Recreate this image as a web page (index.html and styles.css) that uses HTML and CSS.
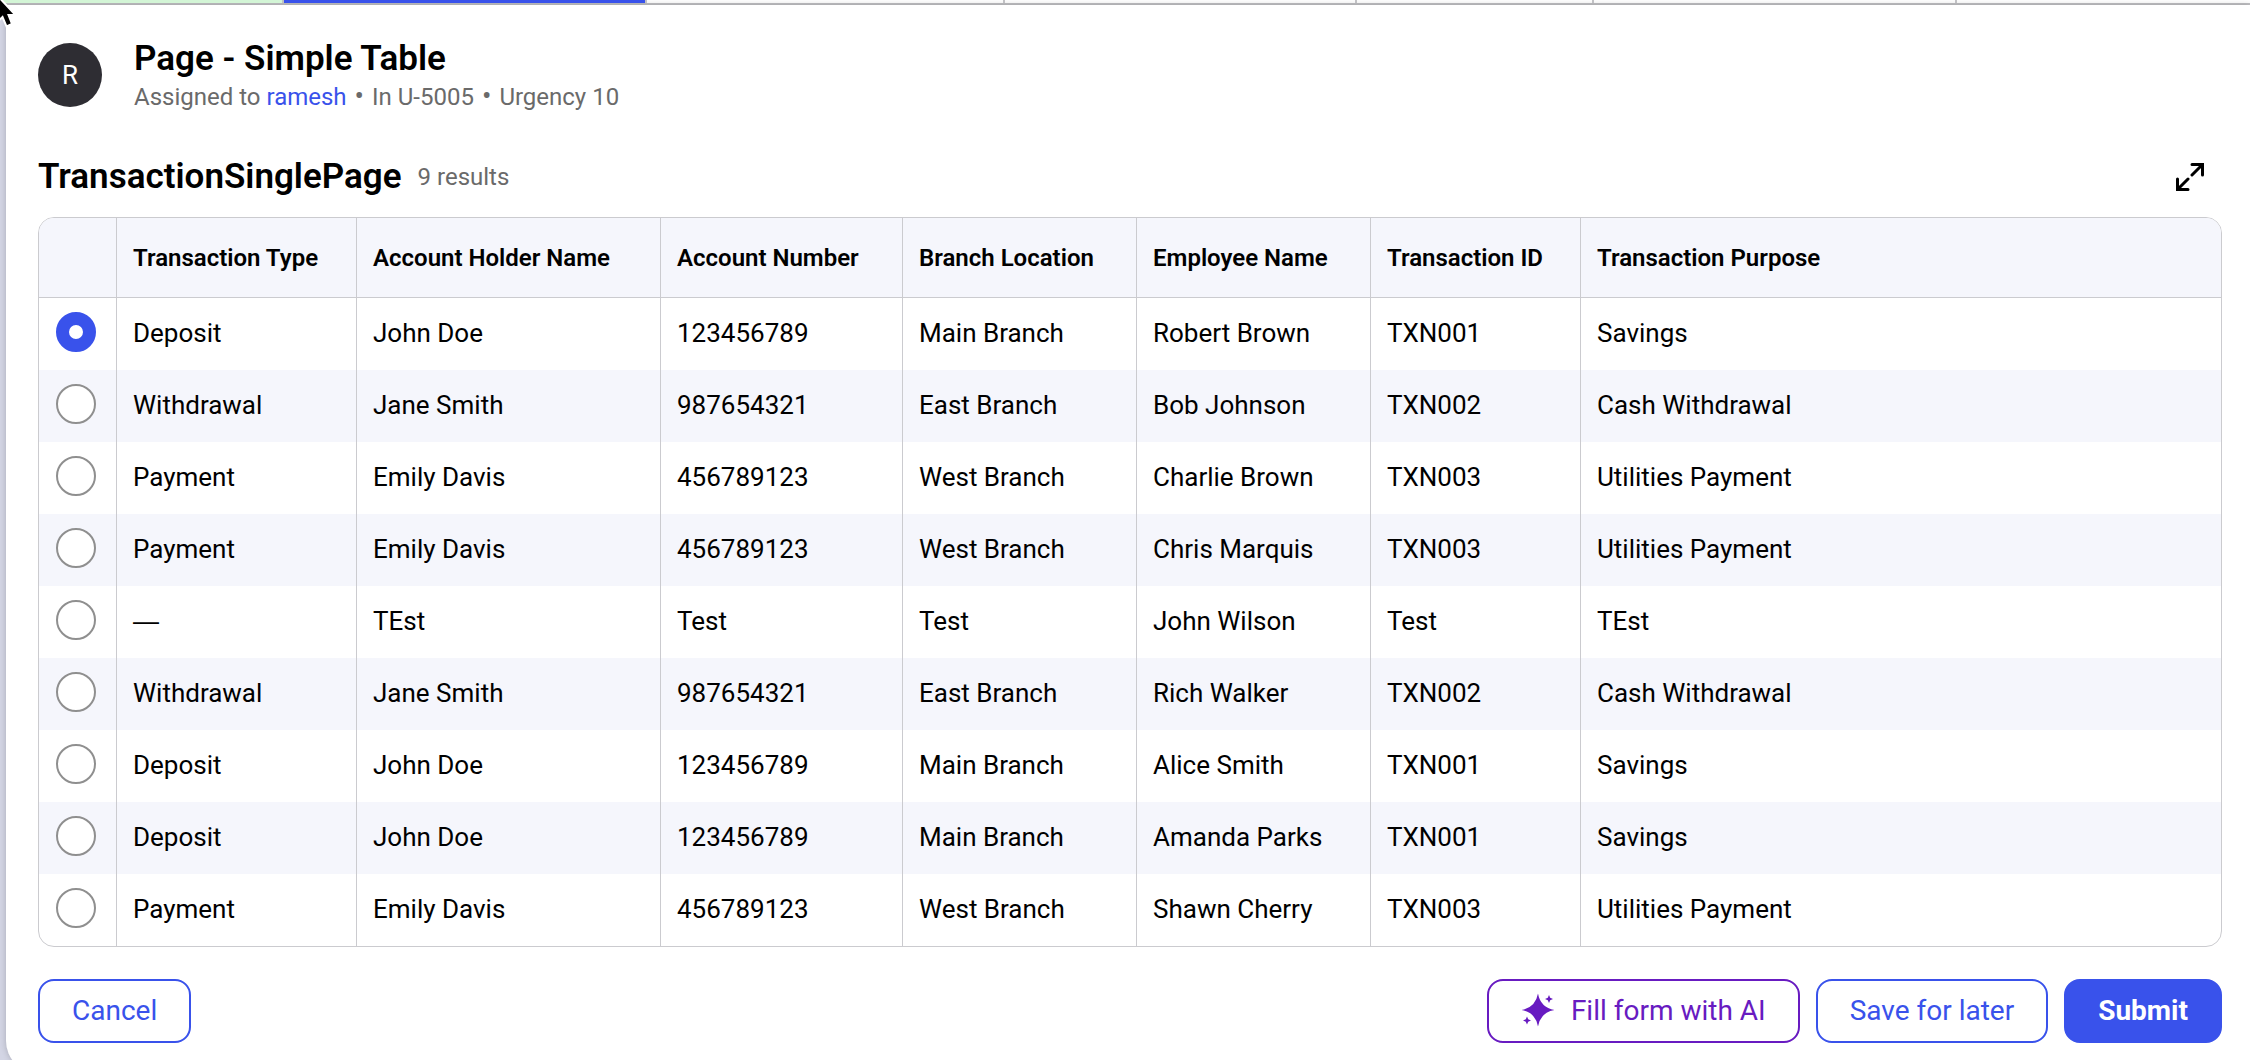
FILE: index.html
```html
<!DOCTYPE html>
<html lang="en">
<head>
    <meta charset="UTF-8">
    <meta name="viewport" content="width=device-width, initial-scale=1.0">
    <title>Page - Simple Table</title>
    <link rel="stylesheet" href="styles.css">
</head>
<body>
    <div class="stages">
        <span class="stage done"></span>
        <span class="stage current"></span>
        <span class="stage"></span>
        <span class="stage"></span>
        <span class="stage"></span>
        <span class="stage"></span>
        <span class="stage last"></span>
    </div>

    <main class="panel">
        <header class="assignment">
            <div class="avatar">R</div>
            <div>
                <h1>Page - Simple Table</h1>
                <p class="meta">Assigned to <a href="#">ramesh</a><span class="dot">•</span>In U-5005<span class="dot">•</span>Urgency 10</p>
            </div>
        </header>

        <div class="table-header">
            <h2>TransactionSinglePage</h2>
            <span class="results">9 results</span>
            <button type="button" class="expand-btn" aria-label="Expand">
                <svg width="28" height="28" viewBox="0 0 28 28" fill="none" stroke="#000" stroke-width="3">
                    <path d="M16 12L26 2M2 26L12 16" stroke-linecap="round"/>
                    <path d="M16 1.5H26.5V12M1.5 16V26.5H12" stroke-linecap="round"/>
                </svg>
            </button>
        </div>

        <div class="table-wrap">
            <table>
                <colgroup>
                    <col class="col-select">
                    <col class="col-type">
                    <col class="col-holder">
                    <col class="col-number">
                    <col class="col-branch">
                    <col class="col-employee">
                    <col class="col-id">
                    <col>
                </colgroup>
                <thead>
                    <tr>
                        <th></th>
                        <th>Transaction Type</th>
                        <th>Account Holder Name</th>
                        <th>Account Number</th>
                        <th>Branch Location</th>
                        <th>Employee Name</th>
                        <th>Transaction ID</th>
                        <th>Transaction Purpose</th>
                    </tr>
                </thead>
                <tbody>
                    <tr>
                        <td><input type="radio" name="txn" aria-label="Robert Brown" checked></td>
                        <td>Deposit</td>
                        <td>John Doe</td>
                        <td>123456789</td>
                        <td>Main Branch</td>
                        <td>Robert Brown</td>
                        <td>TXN001</td>
                        <td>Savings</td>
                    </tr>
                    <tr>
                        <td><input type="radio" name="txn" aria-label="Bob Johnson"></td>
                        <td>Withdrawal</td>
                        <td>Jane Smith</td>
                        <td>987654321</td>
                        <td>East Branch</td>
                        <td>Bob Johnson</td>
                        <td>TXN002</td>
                        <td>Cash Withdrawal</td>
                    </tr>
                    <tr>
                        <td><input type="radio" name="txn" aria-label="Charlie Brown"></td>
                        <td>Payment</td>
                        <td>Emily Davis</td>
                        <td>456789123</td>
                        <td>West Branch</td>
                        <td>Charlie Brown</td>
                        <td>TXN003</td>
                        <td>Utilities Payment</td>
                    </tr>
                    <tr>
                        <td><input type="radio" name="txn" aria-label="Chris Marquis"></td>
                        <td>Payment</td>
                        <td>Emily Davis</td>
                        <td>456789123</td>
                        <td>West Branch</td>
                        <td>Chris Marquis</td>
                        <td>TXN003</td>
                        <td>Utilities Payment</td>
                    </tr>
                    <tr>
                        <td><input type="radio" name="txn" aria-label="John Wilson"></td>
                        <td class="empty">—</td>
                        <td>TEst</td>
                        <td>Test</td>
                        <td>Test</td>
                        <td>John Wilson</td>
                        <td>Test</td>
                        <td>TEst</td>
                    </tr>
                    <tr>
                        <td><input type="radio" name="txn" aria-label="Rich Walker"></td>
                        <td>Withdrawal</td>
                        <td>Jane Smith</td>
                        <td>987654321</td>
                        <td>East Branch</td>
                        <td>Rich Walker</td>
                        <td>TXN002</td>
                        <td>Cash Withdrawal</td>
                    </tr>
                    <tr>
                        <td><input type="radio" name="txn" aria-label="Alice Smith"></td>
                        <td>Deposit</td>
                        <td>John Doe</td>
                        <td>123456789</td>
                        <td>Main Branch</td>
                        <td>Alice Smith</td>
                        <td>TXN001</td>
                        <td>Savings</td>
                    </tr>
                    <tr>
                        <td><input type="radio" name="txn" aria-label="Amanda Parks"></td>
                        <td>Deposit</td>
                        <td>John Doe</td>
                        <td>123456789</td>
                        <td>Main Branch</td>
                        <td>Amanda Parks</td>
                        <td>TXN001</td>
                        <td>Savings</td>
                    </tr>
                    <tr>
                        <td><input type="radio" name="txn" aria-label="Shawn Cherry"></td>
                        <td>Payment</td>
                        <td>Emily Davis</td>
                        <td>456789123</td>
                        <td>West Branch</td>
                        <td>Shawn Cherry</td>
                        <td>TXN003</td>
                        <td>Utilities Payment</td>
                    </tr>
                </tbody>
            </table>
        </div>

        <footer class="actions">
            <button type="button" class="btn">Cancel</button>
            <div class="actions-right">
                <button type="button" class="btn btn-ai">
                    <svg width="34" height="34" viewBox="0 0 34 34" fill="currentColor">
                        <path d="M17 0.5Q19.5 14.5 33.5 17Q19.5 19.5 17 33.5Q14.5 19.5 0.5 17Q14.5 14.5 17 0.5Z"/>
                        <path d="M17 7Q19 15 27 17Q19 19 17 27Q15 19 7 17Q15 15 17 7Z" stroke="currentColor" stroke-width="2"/>
                        <path d="M28 2L29.2 4.8L32 6L29.2 7.2L28 10L26.8 7.2L24 6L26.8 4.8Z"/>
                        <path d="M6 23.5L7.2 26.3L10 27.5L7.2 28.7L6 31.500L4.8 28.7L2 27.5L4.8 26.3Z"/>
                    </svg>
                    Fill form with AI
                </button>
                <button type="button" class="btn">Save for later</button>
                <button type="button" class="btn btn-primary">Submit</button>
            </div>
        </footer>
    </main>

    <svg class="cursor" width="17" height="30" viewBox="0 0 17 30">
        <path d="M-6 -8L15.5 15H8.500L12 24L6.5 26.5L2.5 17L-6 25Z" fill="#000" stroke="#fff" stroke-width="2"/>
    </svg>
</body>
</html>
```

FILE: styles.css
```css
* {
    box-sizing: border-box;
}
body {
    margin: 0;
    height: 100vh;
    overflow: hidden;
    font-family: Roboto, Arial, sans-serif;
    font-size: 26px;
    color: #000;
    background-color: #d3d5e4;
}
h1, h2, p {
    margin: 0;
}
.stages {
    display: flex;
    height: 5px;
    background-color: #fff;
    border-bottom: 2px solid #c1c1c4;
}
.stage {
    flex: 0 0 240px;
    border-right: 2px solid #c1c1c4;
}
.stage.done {
    flex-basis: 284px;
    background-color: #d3f5d6;
}
.stage.current {
    flex-basis: 363px;
    background-color: #3952eb;
}
.stage:nth-child(3) {
    flex-basis: 358px;
}
.stage:nth-child(4) {
    flex-basis: 352px;
}
.stage:nth-child(5) {
    flex-basis: 237px;
}
.stage:nth-child(6) {
    flex-basis: 363px;
}
.stage.last {
    flex: 1;
    border-right: none;
}
.panel {
    margin-left: 6px;
    padding: 32px 28px 30px 32px;
    background-color: #fff;
    border-bottom-left-radius: 32px;
    box-shadow: 0 0 6px rgba(0, 0, 0, 0.2);
}
.assignment {
    display: flex;
    align-items: center;
    gap: 32px;
    padding-top: 2px;
}
.avatar {
    display: flex;
    align-items: center;
    justify-content: center;
    width: 64px;
    height: 64px;
    margin-bottom: 4px;
    border-radius: 50%;
    background-color: #2e2d33;
    color: #fff;
    font-size: 26px;
}
h1, h2 {
    font-size: 35px;
    font-weight: 600;
    line-height: 40px;
}
.meta {
    font-size: 24px;
    line-height: 36px;
    color: #6a6a6a;
}
a {
    color: #3952eb;
    text-decoration: none;
}
.dot {
    margin: 0 8px;
    font-size: 28px;
    line-height: 24px;
}
.table-header {
    display: flex;
    align-items: center;
    height: 64px;
    margin: 30px 0 8px;
}
.results {
    margin-left: 16px;
    font-size: 24px;
    color: #6a6a6a;
}
.expand-btn {
    display: flex;
    margin: 0 18px 0 auto;
    padding: 0;
    border: none;
    background: none;
    cursor: pointer;
}
.table-wrap {
    border: 1px solid #cbcbcf;
    border-radius: 16px;
    overflow: hidden;
}
table {
    width: 100%;
    table-layout: fixed;
    border-collapse: separate;
    border-spacing: 0;
}
.col-select {
    width: 78px;
}
.col-type {
    width: 240px;
}
.col-holder {
    width: 304px;
}
.col-number {
    width: 242px;
}
.col-branch,
.col-employee {
    width: 234px;
}
.col-id {
    width: 210px;
}
th, td {
    padding: 0 16px;
    text-align: left;
    white-space: nowrap;
    border-right: 1px solid #cbcbcf;
}
th:last-child,
td:last-child {
    border-right: none;
}
th {
    height: 80px;
    font-size: 24px;
    font-weight: 600;
    background-color: #f5f6fc;
    border-bottom: 1px solid #cbcbcf;
}
td {
    height: 72px;
    padding-bottom: 2px;
}
td.empty {
    font-family: "Liberation Sans", Arial, sans-serif;
}
tbody tr:nth-child(even) {
    background-color: #f5f6fc;
}
input[type="radio"] {
    appearance: none;
    display: block;
    width: 40px;
    height: 40px;
    margin: 0 1px 2px;
    border: 2px solid #8f8f8f;
    border-radius: 50%;
    background-color: #fff;
}
input[type="radio"]:checked {
    border: 13px solid #3952eb;
}
.actions,
.actions-right {
    display: flex;
    justify-content: space-between;
    gap: 16px;
}
.actions {
    margin-top: 32px;
}
.btn {
    display: flex;
    align-items: center;
    gap: 16px;
    height: 64px;
    padding: 0 32px 2px;
    border: 2px solid #3952eb;
    border-radius: 16px;
    background-color: #fff;
    color: #3952eb;
    font-family: inherit;
    font-size: 28px;
    cursor: pointer;
}
.btn-ai {
    border-color: #681bc1;
    color: #681bc1;
}
.btn-primary {
    background-color: #3952eb;
    color: #fff;
    font-weight: 700;
}
.cursor {
    position: absolute;
    top: 0;
    left: 0;
}
```
